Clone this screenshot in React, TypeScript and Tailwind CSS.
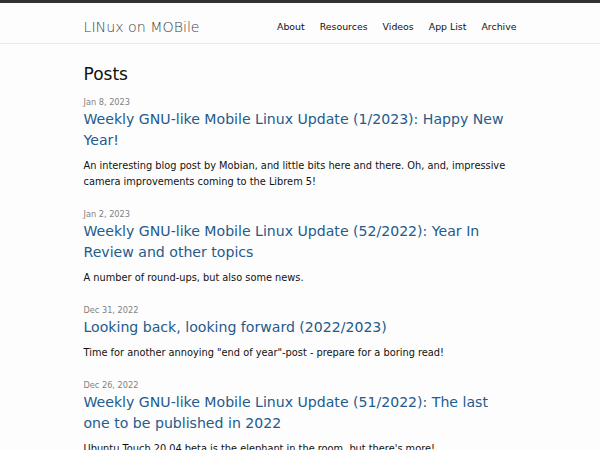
const posts = [
  {
    date: "Jan 8, 2023",
    title: "Weekly GNU-like Mobile Linux Update (1/2023): Happy New Year!",
    excerpt:
      "An interesting blog post by Mobian, and little bits here and there. Oh, and, impressive camera improvements coming to the Librem 5!",
  },
  {
    date: "Jan 2, 2023",
    title: "Weekly GNU-like Mobile Linux Update (52/2022): Year In Review and other topics",
    excerpt: "A number of round-ups, but also some news.",
  },
  {
    date: "Dec 31, 2022",
    title: "Looking back, looking forward (2022/2023)",
    excerpt: 'Time for another annoying "end of year"-post - prepare for a boring read!',
  },
  {
    date: "Dec 26, 2022",
    title: "Weekly GNU-like Mobile Linux Update (51/2022): The last one to be published in 2022",
    excerpt: "Ubuntu Touch 20.04 beta is the elephant in the room, but there's more!",
  },
]

const navItems = ["About", "Resources", "Videos", "App List", "Archive"]

export default function App() {
  return (
    <div className="min-h-[450px] bg-[#fdfdfd] font-['DejaVu_Sans',sans-serif] text-[#111]">
      {/* Header */}
      <header className="border-t-[3px] border-b border-t-[#333] border-b-[#e8e8e8]">
        <div className="mx-auto flex h-[40px] w-[433px] items-center justify-between pt-[8px]">
          <a href="#" className="text-[14.2px] font-light leading-[32px] text-[#424242]">
            LINux on MOBile
          </a>
          <nav className="flex gap-[15px] text-[9.4px] leading-[32px] text-[#111]">
            {navItems.map((item) => (
              <a key={item} href="#">
                {item}
              </a>
            ))}
          </nav>
        </div>
      </header>

      {/* Posts */}
      <main className="mx-auto w-[433px] pt-[18px]">
        <h1 className="text-[17px] leading-[24px]">Posts</h1>
        <ul className="mt-[9px]">
          {posts.map((post) => (
            <li key={post.date} className="mb-[17px]">
              <span className="block text-[8.2px] leading-[14px] text-[#828282]">{post.date}</span>
              <h3 className="text-[14.1px] leading-[21px]">
                <a href="#" className="text-[#245a8c]">
                  {post.title}
                </a>
              </h3>
              <p className="mt-[7px] text-[9.8px] leading-[16px]">{post.excerpt}</p>
            </li>
          ))}
        </ul>
      </main>
    </div>
  )
}
